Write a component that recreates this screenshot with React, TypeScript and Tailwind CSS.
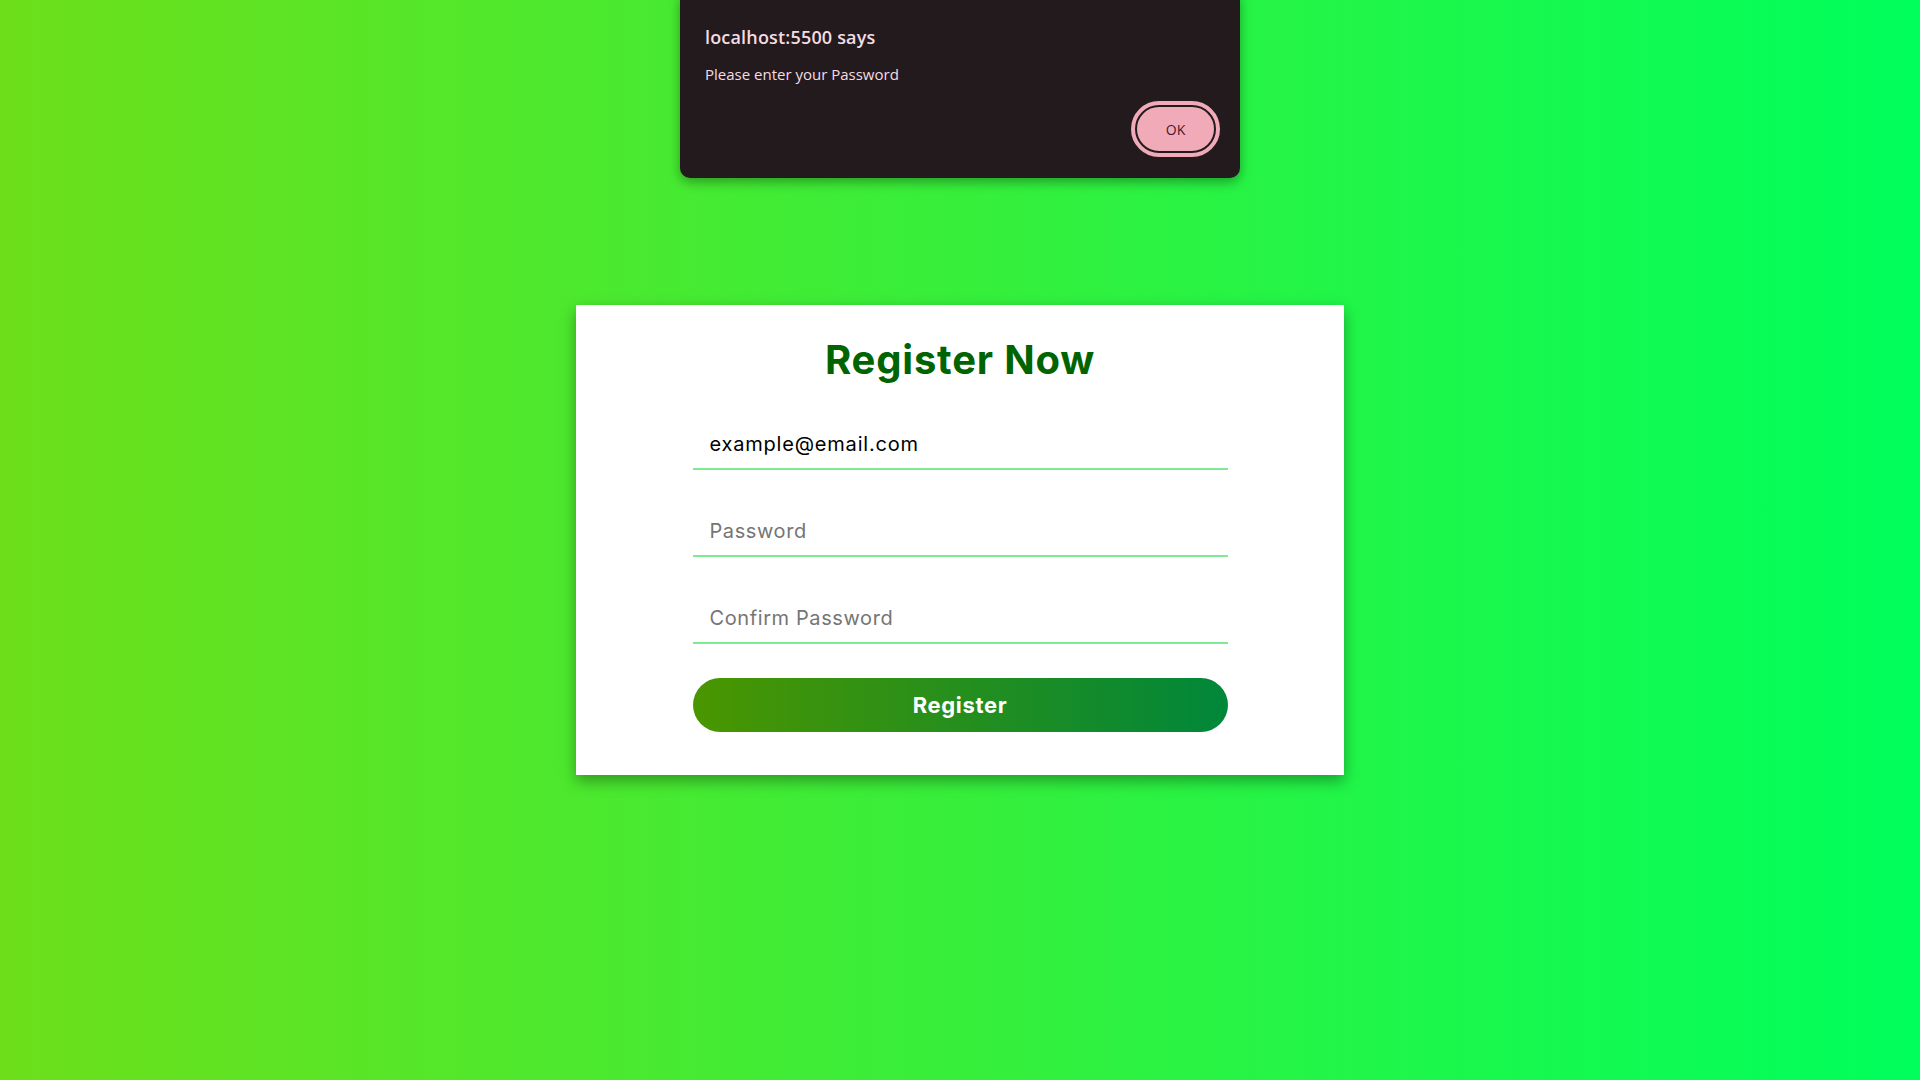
export default function App() {
  return (
    <div className="relative min-h-screen w-full flex items-center justify-center bg-[linear-gradient(to_right,#6ddf1a,#00ff5c)]">
      {/* browser alert */}
      <div className="absolute left-1/2 top-[-10px] -translate-x-1/2 w-[560px] h-[188px] rounded-[10px] bg-[#231a1d] shadow-[0_4px_12px_rgba(0,0,0,0.35)] font-['Open_Sans',sans-serif]">
        <div className="pl-[25px] pt-[34px] text-[18px] font-semibold text-[#f3dde2] leading-[26px] tracking-[0.01em]">localhost:5500 says</div>
        <div className="pl-[25px] pt-[14px] text-[15px] text-[#f3dde2] leading-[20px]">Please enter your Password</div>
        <div className="flex justify-end pr-[20px] pt-[17px]">
          <button className="w-[89px] h-[56px] rounded-full border-2 border-[#f0aab8] p-[2px] bg-[#f0aab8]">
            <span className="flex w-full h-full items-center justify-center rounded-full border-2 border-[#231a1d] bg-[#f0aab8] text-[14px] text-[#4a1830]">OK</span>
          </button>
        </div>
      </div>

      {/* card */}
      <div className="w-[768px] bg-white shadow-[0_6px_14px_rgba(0,0,0,0.35)] pt-[30px] pb-[43px] font-['Inter',sans-serif]">
        <h1 className="text-center text-[40px] leading-[50px] font-bold text-[#006400] tracking-[0.02em]">Register Now</h1>
        <form className="w-[535px] mx-auto flex flex-col">
          <input
            type="email"
            defaultValue="example@email.com"
            className="mt-[35px] h-[50px] px-[17px] border-b-2 border-[#7eea94] outline-none text-[20px] tracking-[0.04em] text-black"
          />
          <input
            type="password"
            placeholder="Password"
            className="mt-[37px] h-[50px] px-[17px] border-b-2 border-[#7eea94] outline-none text-[20px] tracking-[0.03em] text-black placeholder:text-[#757575]"
          />
          <input
            type="password"
            placeholder="Confirm Password"
            className="mt-[37px] h-[50px] px-[17px] border-b-2 border-[#7eea94] outline-none text-[20px] tracking-[0.03em] text-black placeholder:text-[#757575]"
          />
          <button
            type="button"
            className="mt-[34px] h-[54px] rounded-full bg-[linear-gradient(to_right,#4a9600,#00873a)] text-white text-[22px] font-bold tracking-[0.03em]"
          >
            Register
          </button>
        </form>
      </div>
    </div>
  );
}
